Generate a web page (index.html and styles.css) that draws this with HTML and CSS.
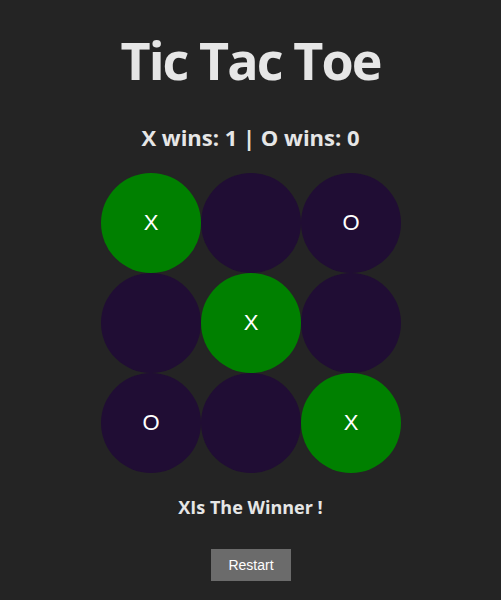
FILE: index.html
```html
<!DOCTYPE html>
<html>
<head>
<meta charset="utf-8">
<link rel="stylesheet" href="styles.css">
</head>
<body>
<div class="app">
  <h1 class="title">Tic Tac Toe</h1>
  <h2 class="score">X wins: 1 | O wins: 0</h2>
  <div class="board">
    <button class="cell win">X</button>
    <button class="cell"></button>
    <button class="cell">O</button>
    <button class="cell"></button>
    <button class="cell win">X</button>
    <button class="cell"></button>
    <button class="cell">O</button>
    <button class="cell"></button>
    <button class="cell win">X</button>
  </div>
  <p class="status">XIs The Winner !</p>
  <button class="restart">Restart</button>
</div>
</body>
</html>
```

FILE: styles.css
```css
html, body {
  margin: 0;
  padding: 0;
  background: #242424;
}
.app {
  display: flex;
  flex-direction: column;
  align-items: center;
  font-family: "Open Sans", "Noto Sans", sans-serif;
  color: #e6e6e6;
  padding-top: 22px;
}
.title {
  margin: 0;
  font-size: 52px;
  font-weight: 700;
  line-height: 76px;
  letter-spacing: -1.9px;
}
.score {
  margin: 24px 0 0;
  font-size: 22px;
  font-weight: 700;
  line-height: 30px;
}
.board {
  margin-top: 21px;
  display: grid;
  grid-template-columns: repeat(3, 100px);
  grid-template-rows: repeat(3, 100px);
  margin-left: 1px;
}
.cell {
  width: 100px;
  height: 100px;
  border: none;
  border-radius: 50%;
  background: #200d34;
  color: #ffffff;
  font-family: "Liberation Sans", Arial, sans-serif;
  font-size: 22px;
  padding: 0;
}
.cell.win {
  background: #008000;
}
.status {
  margin: 22px 0 0;
  font-size: 18px;
  font-weight: 700;
  line-height: 24px;
}
.restart {
  margin-top: 30px;
  width: 80px;
  height: 32px;
  border: none;
  background: #6b6b6b;
  color: #ffffff;
  font-family: "Liberation Sans", Arial, sans-serif;
  font-size: 14px;
  margin-left: 1px;
}
```
